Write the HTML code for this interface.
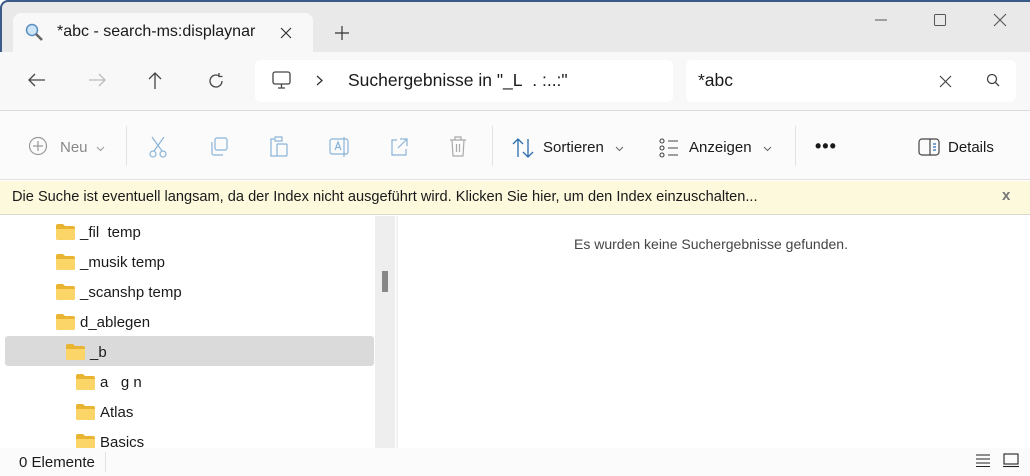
<!DOCTYPE html>
<html><head><meta charset="utf-8"><style>
*{margin:0;padding:0;box-sizing:border-box}
body{width:1030px;height:476px;overflow:hidden;background:#fff;font-family:"Segoe UI","Liberation Sans",sans-serif;color:#1a1a1a;position:relative}
.a{position:absolute}
.t{font-size:15px;white-space:nowrap}
svg{position:absolute;overflow:visible}
</style></head><body>
<div class="a" style="left:0;top:0;width:1030px;height:52px;background:#e9e9e9;border-top:2px solid #3a5a8a;border-left:2px solid #3a5a8a;border-top-left-radius:8px"></div>
<div class="a" style="left:13px;top:13px;width:300px;height:40px;background:#f8f8f8;border-radius:8px 8px 0 0"></div>
<svg style="left:25px;top:23px" width="20" height="20"><circle cx="7" cy="7" r="5.5" fill="#cde6f8" stroke="#5a8fc0" stroke-width="1.5"/><line x1="11" y1="11" x2="17" y2="17" stroke="#666" stroke-width="2.5"/></svg>
<div class="a t" style="left:57px;top:23px;font-size:16px">*abc - search-ms:displaynar</div>
<svg style="left:280px;top:27px" width="12" height="12" stroke="#333" stroke-width="1.2"><path d="M1 1L11 11M11 1L1 11"/></svg>
<svg style="left:335px;top:26px" width="14" height="14" stroke="#333" stroke-width="1.2"><path d="M7 0V14M0 7H14"/></svg>
<svg style="left:875px;top:19px" width="12" height="2" stroke="#555"><path d="M0 1H12"/></svg>
<svg style="left:934px;top:14px" width="12" height="12" stroke="#555" fill="none"><rect x="0.5" y="0.5" width="11" height="11" rx="1"/></svg>
<svg style="left:994px;top:14px" width="12" height="12" stroke="#555" stroke-width="1.1"><path d="M0 0L12 12M12 0L0 12"/></svg>
<div class="a" style="left:0;top:52px;width:1030px;height:59px;background:#f8f8f8;border-bottom:1px solid #dcdcdc"></div>
<svg style="left:28px;top:73px" width="18" height="14" stroke="#444" stroke-width="1.3" fill="none"><path d="M17 7H1M7 1L1 7L7 13"/></svg>
<svg style="left:88px;top:73px" width="18" height="14" stroke="#bbb" stroke-width="1.3" fill="none"><path d="M1 7H17M11 1L17 7L11 13"/></svg>
<svg style="left:148px;top:72px" width="14" height="18" stroke="#444" stroke-width="1.3" fill="none"><path d="M7 17V1M1 7L7 1L13 7"/></svg>
<svg style="left:208px;top:73px" width="16" height="16" stroke="#444" stroke-width="1.3" fill="none"><path d="M14 8A6 6 0 1 1 11 2.8M11 0V3.5H14.5"/></svg>
<div class="a" style="left:255px;top:60px;width:418px;height:42px;background:#fff;border-radius:6px"></div>
<svg style="left:272px;top:71px" width="20" height="19" stroke="#444" stroke-width="1.3" fill="none"><rect x="1" y="1" width="17" height="12" rx="2"/><path d="M9.5 13V17M6 17H13"/></svg>
<svg style="left:316px;top:75px" width="7" height="11" stroke="#333" stroke-width="1.3" fill="none"><path d="M1 1L6 5.5L1 10"/></svg>
<div class="a t" style="left:348px;top:70px;font-size:17.5px">Suchergebnisse in "_L&nbsp;&nbsp;.&nbsp;:..:"</div>
<div class="a" style="left:686px;top:60px;width:330px;height:42px;background:#fff;border-radius:6px"></div>
<div class="a t" style="left:698px;top:70px;font-size:17.5px">*abc</div>
<svg style="left:940px;top:76px" width="11" height="11" stroke="#444" stroke-width="1.2"><path d="M0 0L11 11M11 0L0 11"/></svg>
<svg style="left:986px;top:73px" width="14" height="14" stroke="#444" stroke-width="1.3" fill="none"><circle cx="6" cy="6" r="4.5"/><path d="M9.5 9.5L13 13"/></svg>
<div class="a" style="left:0;top:111px;width:1030px;height:69px;background:#fbfbfb;border-bottom:1px solid #e0e0e0"></div>
<svg style="left:29px;top:137px" width="20" height="20" stroke="#999" stroke-width="1.2" fill="none"><circle cx="9" cy="9" r="8.5"/><path d="M9 4V14M4 9H14"/></svg>
<div class="a t" style="left:60px;top:139px;color:#888">Neu</div>
<svg style="left:97px;top:147px" width="7" height="4" stroke="#999" fill="none"><path d="M0 0L3.5 3.5L7 0"/></svg>
<div class="a" style="left:126px;top:126px;width:1px;height:40px;background:#e3e3e3"></div>
<svg style="left:149px;top:136px" width="18" height="22" stroke="#8ab4d8" stroke-width="1.2" fill="none"><path d="M3 1L13 15M15 1L5 15"/><circle cx="4" cy="18" r="3"/><circle cx="14" cy="18" r="3"/></svg>
<svg style="left:209px;top:137px" width="20" height="20" stroke="#8ab4d8" stroke-width="1.2" fill="none"><rect x="6" y="1" width="12" height="12" rx="2"/><path d="M3 5V16A2 2 0 0 0 5 18H14"/></svg>
<svg style="left:269px;top:136px" width="20" height="22" stroke="#8ab4d8" stroke-width="1.2" fill="none"><path d="M5 3H2V20H8"/><rect x="6" y="1" width="7" height="4"/><rect x="8" y="8" width="10" height="12" rx="1"/></svg>
<svg style="left:329px;top:137px" width="22" height="20" stroke="#8ab4d8" stroke-width="1.2" fill="none"><rect x="1" y="2" width="18" height="15" rx="2"/><path d="M6 13L9 5L12 13M7 10.5H11M15 0V20"/></svg>
<svg style="left:389px;top:137px" width="20" height="20" stroke="#8ab4d8" stroke-width="1.2" fill="none"><path d="M8 3H3V18H17V12M11 2H18V9M18 2L9 11"/></svg>
<svg style="left:449px;top:136px" width="18" height="22" stroke="#aaa" stroke-width="1.2" fill="none"><path d="M1 4H17M6 4V1H12V4M3 4L4 20H14L15 4M7.5 8V16M10.5 8V16"/></svg>
<div class="a" style="left:492px;top:126px;width:1px;height:40px;background:#e3e3e3"></div>
<svg style="left:512px;top:138px" width="22" height="20" stroke="#2a6cb0" stroke-width="1.3" fill="none"><path d="M6 19V1M1 6L6 1L11 6M16 1V19M11 14L16 19L21 14"/></svg>
<div class="a t" style="left:543px;top:139px">Sortieren</div>
<svg style="left:616px;top:147px" width="7" height="4" stroke="#666" fill="none"><path d="M0 0L3.5 3.5L7 0"/></svg>
<svg style="left:659px;top:138px" width="20" height="20" stroke="#444" stroke-width="1.1" fill="none"><circle cx="3" cy="3" r="2"/><circle cx="3" cy="10" r="2"/><circle cx="3" cy="17" r="2"/><path d="M9 3H19M9 10H19M9 17H19"/></svg>
<div class="a t" style="left:689px;top:139px">Anzeigen</div>
<svg style="left:764px;top:147px" width="7" height="4" stroke="#666" fill="none"><path d="M0 0L3.5 3.5L7 0"/></svg>
<div class="a" style="left:795px;top:126px;width:1px;height:40px;background:#e3e3e3"></div>
<div class="a" style="left:815px;top:136px;font-size:18px;font-weight:bold;letter-spacing:1px">•••</div>
<svg style="left:918px;top:138px" width="22" height="18" stroke="#444" stroke-width="1.2" fill="none"><rect x="1" y="1" width="20" height="16" rx="3"/><path d="M12 1V17" /><path d="M15 6H18M15 9H18M15 12H18" stroke="#2a6cb0"/></svg>
<div class="a t" style="left:948px;top:139px">Details</div>
<div class="a" style="left:0;top:181px;width:1030px;height:34px;background:#fcf9dc;border-bottom:1px solid #d8d8cc"></div>
<div class="a t" style="left:12px;top:189px;font-size:14.6px">Die Suche ist eventuell langsam, da der Index nicht ausgeführt wird. Klicken Sie hier, um den Index einzuschalten...</div>
<div class="a" style="left:1002px;top:187px;font-size:15px;font-weight:bold;color:#777">x</div>
<div class="a" style="left:375px;top:216px;width:20px;height:232px;background:#eeeeee"></div>
<div class="a" style="left:382px;top:271px;width:6px;height:21px;background:#888"></div>
<div class="a" style="left:396px;top:216px;width:2px;height:232px;background:#f3f3f3"></div>
<div class="a" style="left:5px;top:336px;width:369px;height:30px;background:#dadada;border-radius:3px"></div>
<div class="a t" style="left:574px;top:236px;font-size:14px;color:#444">Es wurden keine Suchergebnisse gefunden.</div>
<div id="tree"></div>
<div class="a" style="left:0;top:448px;width:1030px;height:28px;background:#fbfbfb"></div>
<div class="a t" style="left:19px;top:454px;font-size:15px">0 Elemente</div>
<div class="a" style="left:105px;top:452px;width:1px;height:20px;background:#e3e3e3"></div>
<svg style="left:976px;top:453px" width="14" height="14" stroke="#222" stroke-width="1.1"><path d="M0 2H14M0 6H14M0 10H14M0 13.5H14"/></svg>
<svg style="left:1003px;top:453px" width="16" height="14" stroke="#222" stroke-width="1.1" fill="none"><rect x="1" y="1" width="14" height="10"/><path d="M0 13.5H16"/></svg>
<script>
var items=[[56,232,"_fil&nbsp;&nbsp;temp"],[56,262,"_musik temp"],[56,292,"_scanshp temp"],[56,322,"d_ablegen"],[66,352,"_b"],[76,382,"a&nbsp;&nbsp;&nbsp;g&nbsp;n"],[76,412,"Atlas"],[76,442,"Basics"]];
var h="";items.forEach(function(i){h+='<svg style="left:'+i[0]+'px;top:'+(i[1]-8)+'px" width="19" height="16"><path d="M0 2Q0 0 2 0H7L9 2H17Q19 2 19 4V14Q19 16 17 16H2Q0 16 0 14Z" fill="#e8b432"/><path d="M0 5H19V14Q19 16 17 16H2Q0 16 0 14Z" fill="#fbd567"/></svg><div class="a t" style="left:'+(i[0]+24)+'px;top:'+(i[1]-8)+'px">'+i[2]+'</div>';});
document.getElementById("tree").outerHTML=h;
</script>
</body></html>
